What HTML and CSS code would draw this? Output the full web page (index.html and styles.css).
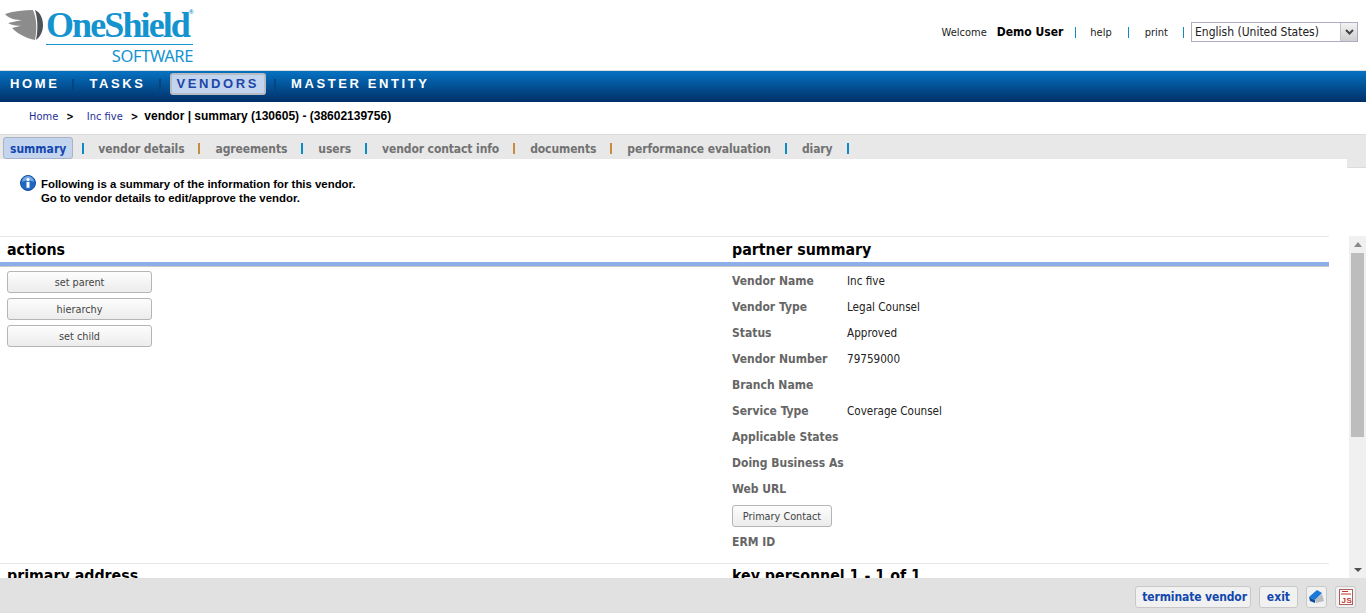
FILE: index.html
```html
<!DOCTYPE html>
<html lang="en">
<head>
  <meta charset="UTF-8">
  <title>Vendor Summary</title>
  <link rel="stylesheet" href="styles.css">
</head>
<body>

  <header class="top">
    <a class="logo" href="#">
      <svg class="logo-mark" width="43" height="32" viewBox="0 0 43 32">
        <path d="M0 4 C9 1 19 0 28 0 C32 9 32 21 30 30 C21 28 13 24 7 18 L17 15.5 C12 16 7 15.5 3 13 L17 10 C11 10 4 9 0 4 Z" fill="#8c8c8c"/>
        <path d="M30 0 C35 2 38 8 38 15 C38 22 35 27 31 30 C33 21 33 9 30 0 Z" fill="#4f5359"/>
      </svg>
      <span class="logo-text">
        <span class="logo-name">OneShield<sup>®</sup></span>
        <span class="logo-sub">SOFTWARE</span>
      </span>
    </a>
    <div class="userbar">
      <span>Welcome</span>
      <b class="username">Demo User</b>
      <i class="pipe"></i>
      <a href="#">help</a>
      <i class="pipe"></i>
      <a href="#">print</a>
      <i class="pipe"></i>
      <div class="lang">
        <span class="lang-value">English (United States)</span>
        <span class="lang-arrow">
          <svg width="9" height="6" viewBox="0 0 9 6"><path d="M1 1 L4.5 4.5 L8 1" fill="none" stroke="#444" stroke-width="2"/></svg>
        </span>
      </div>
    </div>
  </header>

  <nav class="mainnav">
    <a href="#">HOME</a>
    <i class="navsep"></i>
    <a href="#">TASKS</a>
    <i class="navsep"></i>
    <a class="active" href="#">VENDORS</a>
    <i class="navsep"></i>
    <a href="#">MASTER ENTITY</a>
  </nav>

  <div class="crumbs">
    <a href="#">Home</a>
    <span class="gt">&gt;</span>
    <a href="#">Inc five</a>
    <span class="gt">&gt;</span>
    <b>vendor | summary (130605) - (38602139756)</b>
  </div>

  <div class="tabs">
    <a class="tab active" href="#">summary</a><i class="tabsep blue"></i>
    <a class="tab" href="#">vendor details</a><i class="tabsep orange"></i>
    <a class="tab" href="#">agreements</a><i class="tabsep blue"></i>
    <a class="tab" href="#">users</a><i class="tabsep blue"></i>
    <a class="tab" href="#">vendor contact info</a><i class="tabsep orange"></i>
    <a class="tab" href="#">documents</a><i class="tabsep orange"></i>
    <a class="tab" href="#">performance evaluation</a><i class="tabsep blue"></i>
    <a class="tab" href="#">diary</a><i class="tabsep blue"></i>
  </div>

  <div class="notice">
    <svg class="info-icon" width="16" height="16" viewBox="0 0 16 16">
      <circle cx="8" cy="8" r="7.5" fill="#1c68c4" stroke="#124f9e"/>
      <path d="M2 7 A6 6 0 0 1 14 7 C11 5 5 5 2 7 Z" fill="#6fa8e6"/>
      <rect x="6.5" y="6.8" width="3" height="6" fill="#fff"/>
      <circle cx="8" cy="4.5" r="1.6" fill="#fff"/>
    </svg>
    <p>Following is a summary of the information for this vendor.<br>Go to vendor details to edit/approve the vendor.</p>
  </div>

  <main class="scroller">
    <div class="content">
      <div class="panels">
        <section class="panel">
          <h2>actions</h2>
          <div class="actions">
            <button class="btn wide">set parent</button>
            <button class="btn wide">hierarchy</button>
            <button class="btn wide">set child</button>
          </div>
        </section>
        <section class="panel">
          <h2>partner summary</h2>
          <dl class="fields">
            <div class="field"><dt>Vendor Name</dt><dd>Inc five</dd></div>
            <div class="field"><dt>Vendor Type</dt><dd>Legal Counsel</dd></div>
            <div class="field"><dt>Status</dt><dd>Approved</dd></div>
            <div class="field"><dt>Vendor Number</dt><dd>79759000</dd></div>
            <div class="field"><dt>Branch Name</dt><dd></dd></div>
            <div class="field"><dt>Service Type</dt><dd>Coverage Counsel</dd></div>
            <div class="field"><dt>Applicable States</dt><dd></dd></div>
            <div class="field"><dt>Doing Business As</dt><dd></dd></div>
            <div class="field"><dt>Web URL</dt><dd></dd></div>
            <div class="field contact-row"><button class="btn contact">Primary Contact</button></div>
            <div class="field"><dt>ERM ID</dt><dd></dd></div>
          </dl>
        </section>
        <section class="panel">
          <h2>primary address</h2>
        </section>
        <section class="panel">
          <h2>key personnel 1 - 1 of 1</h2>
        </section>
      </div>
    </div>
    <div class="scrollbar">
      <span class="arrow up"></span>
      <span class="thumb"></span>
      <span class="arrow down"></span>
    </div>
  </main>

  <footer class="bottom">
    <button class="foot-btn terminate">terminate vendor</button>
    <button class="foot-btn exit">exit</button>
    <button class="foot-btn icon">
      <svg width="17" height="16" viewBox="0 0 17 16">
        <path d="M1 8 L9 1 L14 4 L7 11 Z" fill="#1a78d8"/>
        <path d="M1 8 L7 11 L7 14 L2 12 Z" fill="#0d4d9e"/>
        <path d="M7 11 L14 5 L16 12 L8 14 Z" fill="#b9bcc0"/>
      </svg>
    </button>
    <button class="foot-btn icon">
      <svg width="16" height="18" viewBox="0 0 16 18">
        <rect x="1.5" y="1.5" width="13" height="15" fill="#fff" stroke="#a5605a"/>
        <path d="M4 3.5 H10 M3 6 H13" stroke="#c8322a"/>
        <text x="3.5" y="15" class="js-mark">JS</text>
      </svg>
    </button>
  </footer>

</body>
</html>
```

FILE: styles.css
```css
* {
  box-sizing: border-box;
}

html, body {
  height: 100%;
}

body {
  margin: 0;
  height: 613px;
  overflow: hidden;
  display: flex;
  flex-direction: column;
  background-color: #fff;
  color: #000;
  font-family: "DejaVu Sans Condensed", "DejaVu Sans", sans-serif;
  font-stretch: condensed;
  font-size: 11px;
}

a {
  text-decoration: none;
  color: inherit;
}

/* top strip */
.top {
  height: 70px;
  flex: none;
  display: flex;
  justify-content: space-between;
  padding: 9px 8px 0 5px;
}

.logo {
  display: flex;
  align-items: flex-start;
}

.logo-mark {
  margin-top: 1px;
  flex: none;
}

.logo-text {
  display: flex;
  flex-direction: column;
  margin-left: -2px;
  width: 147px;
}

.logo-name {
  font-family: "Liberation Serif", serif;
  font-stretch: normal;
  font-weight: bold;
  font-size: 36px;
  line-height: 33px;
  letter-spacing: -1.9px;
  color: #1493cf;
  border-bottom: 1px solid #1493cf;
  height: 36px;
  white-space: nowrap;
}

.logo-name sup {
  font-size: 6px;
  font-family: "Liberation Sans", sans-serif;
  vertical-align: 23px;
  line-height: 0;
  letter-spacing: 0;
}

.logo-sub {
  align-self: flex-end;
  font-family: "Noto Sans", sans-serif;
  font-stretch: normal;
  font-size: 16.5px;
  line-height: 20px;
  margin-top: 1px;
  letter-spacing: -.4px;
  color: #1493cf;
}

.userbar {
  display: flex;
  align-items: center;
  height: 28px;
  margin-top: 9px;
  font-size: 11px;
  color: #222;
}

.username {
  font-size: 12px;
  margin-left: 10px;
  color: #000;
}

.pipe {
  width: 1px;
  height: 11px;
  background-color: #0e8ac8;
  margin: 0 14px 0 12px;
}

.userbar a + .pipe {
  margin: 0 16px 0 16px;
}

.userbar a + .pipe:last-of-type {
  margin: 0 7px 0 15px;
}

.lang {
  width: 167px;
  height: 20px;
  display: flex;
  border: 1px solid #abadc3;
  font-size: 12px;
}

.lang-value {
  flex: 1;
  padding-left: 3px;
  line-height: 18px;
  white-space: nowrap;
}

.lang-arrow {
  width: 17px;
  display: flex;
  align-items: center;
  justify-content: center;
  background: linear-gradient(#f2f2f2, #cfcfcf);
  border-left: 1px solid #c4c4c4;
}

/* main navigation */
.mainnav {
  height: 32px;
  flex: none;
  display: flex;
  align-items: center;
  padding: 0 0 6px 1px;
  border-top: 1px solid #ddd;
  background: linear-gradient(#0672c2, #003068);
  color: #fff;
}

.mainnav a {
  font-family: "Liberation Sans", sans-serif;
  font-stretch: normal;
  font-weight: bold;
  font-size: 13px;
  letter-spacing: 2.6px;
  padding: 0 9px;
}

.mainnav a.active {
  height: 22px;
  line-height: 18px;
  padding: 0 5px;
  margin: 0 4px 0 3px;
  color: #1c46a8;
  background-color: #c3d4ee;
  border: 2px solid #b9bcc2;
  border-radius: 3px;
}

.navsep {
  width: 2px;
  height: 11px;
  margin: 1px 6px 0 4px;
  background-color: #05457f;
}

/* breadcrumb */
.crumbs {
  height: 32px;
  flex: none;
  display: flex;
  align-items: center;
  padding: 0 0 4px 29px;
  color: #1f2f96;
}

.crumbs .gt {
  color: #000;
  font-weight: bold;
  font-size: 10px;
  margin: 0 6px 0 8px;
}

.crumbs a + .gt + a {
  margin-left: 7px;
}

.crumbs b {
  color: #000;
  font-family: "Liberation Sans", sans-serif;
  font-stretch: normal;
  font-size: 12px;
}

/* tabs */
.tabs {
  position: relative;
  height: 25px;
  flex: none;
  display: flex;
  align-items: center;
  padding: 3px 0 0 3px;
  background-color: #e8e8e8;
  border-top: 1px solid #dcdcdc;
}

.tabs::after {
  content: "";
  position: absolute;
  right: 0;
  top: 24px;
  width: 19px;
  height: 8px;
  background-color: #e8e8e8;
  border-bottom: 1px solid #dcdcdc;
}

.tab {
  font-weight: bold;
  font-size: 12px;
  letter-spacing: -.1px;
  color: #727272;
  padding: 0 14px 0 15px;
}

.tab.active {
  height: 22px;
  line-height: 22px;
  margin-top: -2px;
  padding: 0 6px;
  letter-spacing: 0;
  color: #1247ae;
  background-color: #c3d4ee;
  border: 1px solid #a9b3c6;
  border-radius: 3px;
}

.tabsep {
  width: 2px;
  height: 11px;
}

.tab.active + .tabsep {
  margin: 0 -1px 0 9px;
}

.tabsep.blue {
  background-color: #0e8ac8;
}

.tabsep.orange {
  background-color: #c98b3d;
}

/* info text */
.notice {
  height: 77px;
  flex: none;
  display: flex;
  align-items: flex-start;
  padding: 15px 0 0 20px;
}

.info-icon {
  flex: none;
  margin-top: 1px;
}

.notice p {
  margin: 3px 0 0 5px;
  font-family: "Liberation Sans", sans-serif;
  font-stretch: normal;
  font-weight: bold;
  font-size: 11.4px;
  line-height: 14px;
}

/* scrolling part */
.scroller {
  height: 342px;
  flex: none;
  display: flex;
  overflow: hidden;
}

.content {
  width: 1329px;
  flex: none;
  overflow: hidden;
}

.panels {
  display: grid;
  grid-template-columns: 725px 597px;
  padding-left: 7px;
  border-top: 1px solid #e6e6e6;
}

.panel:nth-child(n+3) {
  border-top: 1px solid #e6e6e6;
  margin-left: -7px;
  padding-left: 7px;
}

.panel:nth-child(4) {
  margin-left: -7px;
}

.panel h2 {
  margin: 0 -7px;
  padding: 4px 7px 0;
  height: 29px;
  font-size: 15.8px;
  line-height: 17px;
  font-weight: bold;
  color: #000;
  border-bottom: 4px solid #8daee8;
  box-shadow: 0 1px 0 #c9c9c9;
}

.panel:nth-child(n+3) h2 {
  padding-top: 3px;
}

.actions {
  display: flex;
  flex-direction: column;
  gap: 5px;
  padding-top: 5px;
  height: 297px;
}

.btn {
  height: 22px;
  padding: 0;
  font-family: "DejaVu Sans Condensed", "DejaVu Sans", sans-serif;
  font-stretch: condensed;
  font-size: 10.8px;
  color: #444;
  background: linear-gradient(#fdfdfd, #ececec);
  border: 1px solid #b5b5b5;
  border-radius: 3px;
}

.btn.wide {
  width: 145px;
}

.btn.contact {
  width: 100px;
}

.fields {
  margin: 0;
  padding-top: 2px;
}

.field {
  display: flex;
  align-items: center;
  height: 26px;
}

.field.contact-row {
  height: 27px;
  padding-top: 1px;
}

.field dt {
  width: 115px;
  flex: none;
  font-weight: bold;
  font-size: 12px;
  color: #666;
  white-space: nowrap;
}

.field dd {
  margin: 0;
  font-size: 11.6px;
  color: #222;
}

/* fake scrollbar */
.scrollbar {
  width: 17px;
  margin-left: 20px;
  flex: none;
  display: flex;
  flex-direction: column;
  align-items: center;
  background-color: #f0f0f0;
}

.thumb {
  width: 13px;
  height: 184px;
  background-color: #bdbdbd;
}

.arrow {
  width: 0;
  height: 0;
  border-left: 4px solid transparent;
  border-right: 4px solid transparent;
}

.arrow.up {
  margin: 6px 0;
  border-bottom: 5px solid #8a8a8a;
}

.arrow.down {
  margin-top: auto;
  margin-bottom: 6px;
  border-top: 4px solid #505050;
}

/* bottom bar */
.bottom {
  height: 35px;
  flex: none;
  display: flex;
  align-items: center;
  justify-content: flex-end;
  gap: 8px;
  padding: 2px 10px 0 0;
  background-color: #e1e1e1;
}

.foot-btn {
  height: 22px;
  font-family: "DejaVu Sans Condensed", "DejaVu Sans", sans-serif;
  font-stretch: condensed;
  font-weight: bold;
  font-size: 12px;
  color: #1247ae;
  background-color: #f1f1f1;
  border: 1px solid #c8c8c8;
  border-radius: 3px;
}

.foot-btn.terminate {
  padding: 0 3px 0 6px;
  letter-spacing: -.12px;
}

.foot-btn.exit {
  padding: 0 7px;
}

.foot-btn.icon {
  width: 21px;
  padding: 0;
  display: flex;
  align-items: center;
  justify-content: center;
}

.js-mark {
  font-family: "Liberation Sans", sans-serif;
  font-size: 8px;
  font-weight: bold;
  letter-spacing: .6px;
  fill: #c8322a;
}
```
